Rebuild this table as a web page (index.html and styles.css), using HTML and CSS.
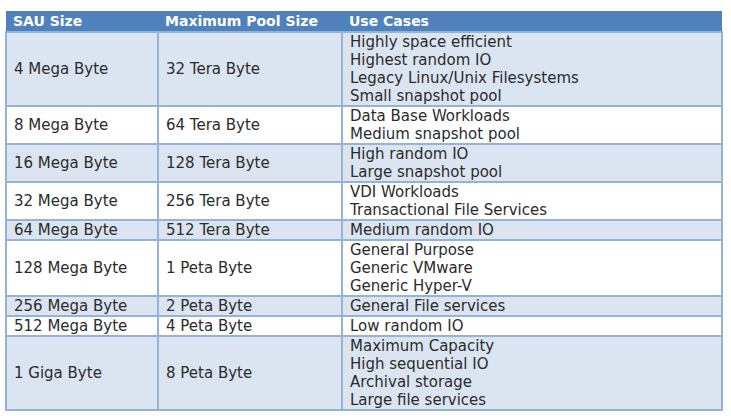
FILE: index.html
```html
<!DOCTYPE html>
<html lang="en">
<head>
<meta charset="utf-8">
<title>SAU Size Table</title>
<link rel="stylesheet" href="styles.css">
</head>
<body>
<table class="sau">
  <colgroup>
    <col class="c1"><col class="c2"><col class="c3">
  </colgroup>
  <thead>
    <tr><th>SAU Size</th><th>Maximum Pool Size</th><th>Use Cases</th></tr>
  </thead>
  <tbody>
    <tr class="alt"><td>4 Mega Byte</td><td>32 Tera Byte</td><td>Highly space efficient<br>Highest random IO<br>Legacy Linux/Unix Filesystems<br>Small snapshot pool</td></tr>
    <tr><td>8 Mega Byte</td><td>64 Tera Byte</td><td>Data Base Workloads<br>Medium snapshot pool</td></tr>
    <tr class="alt"><td>16 Mega Byte</td><td>128 Tera Byte</td><td>High random IO<br>Large snapshot pool</td></tr>
    <tr><td>32 Mega Byte</td><td>256 Tera Byte</td><td>VDI Workloads<br>Transactional File Services</td></tr>
    <tr class="alt"><td>64 Mega Byte</td><td>512 Tera Byte</td><td>Medium random IO</td></tr>
    <tr><td>128 Mega Byte</td><td>1 Peta Byte</td><td>General Purpose<br>Generic VMware<br>Generic Hyper-V</td></tr>
    <tr class="alt"><td>256 Mega Byte</td><td>2 Peta Byte</td><td>General File services</td></tr>
    <tr><td>512 Mega Byte</td><td>4 Peta Byte</td><td>Low random IO</td></tr>
    <tr class="alt"><td>1 Giga Byte</td><td>8 Peta Byte</td><td>Maximum Capacity<br>High sequential IO<br>Archival storage<br>Large file services</td></tr>
  </tbody>
</table>
</body>
</html>
```
FILE: styles.css
```css
html, body {
  margin: 0;
  padding: 0;
  background: #ffffff;
}
body {
  padding: 11px 0 0 5px;
  font-family: "DejaVu Sans", sans-serif;
  color: #2b2b2b;
}
.sau {
  border-collapse: collapse;
  width: 716px;
  table-layout: fixed;
  font-size: 15px;
  line-height: 18px;
}
.c1 { width: 152px; }
.c2 { width: 184px; }
.c3 { width: 380px; }
.sau th {
  background: #4f81bd;
  color: #ffffff;
  font-weight: bold;
  font-size: 14px;
  text-align: left;
  height: 20px;
  padding: 0 7px;
  line-height: 20px;
  border: 0;
}
.sau td {
  padding: 0 7px;
  vertical-align: middle;
  border: 2px solid #95b3d7;
}
.sau td:nth-child(1), .sau td:nth-child(2) {
  white-space: nowrap;
}
.sau tr.alt td {
  background: #dbe5f1;
}
```
